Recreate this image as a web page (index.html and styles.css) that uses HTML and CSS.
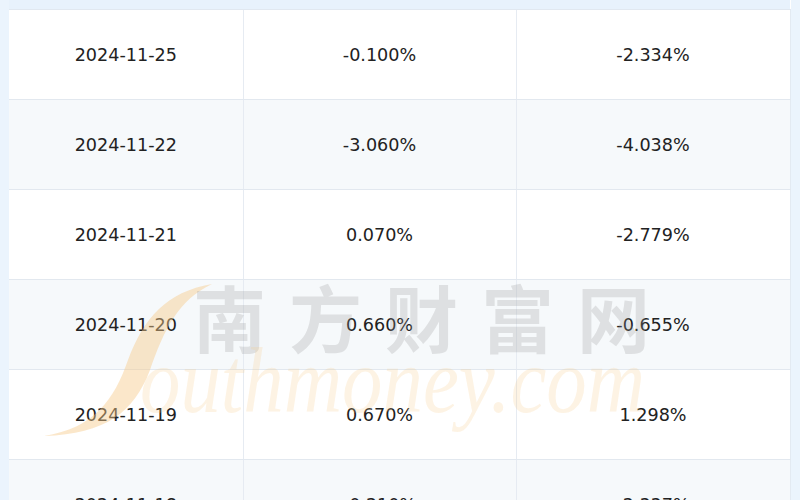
FILE: index.html
```html
<!DOCTYPE html>
<html lang="zh-CN">
<head>
<meta charset="utf-8">
<link rel="stylesheet" href="styles.css">
</head>
<body>
<div class="page">
  <table class="data">
    <colgroup><col class="c1"><col class="c2"><col class="c3"></colgroup>
    <thead><tr class="head"><th></th><th></th><th></th></tr></thead>
    <tbody>
      <tr><td>2024-11-25</td><td>-0.100%</td><td>-2.334%</td></tr>
      <tr class="alt"><td>2024-11-22</td><td>-3.060%</td><td>-4.038%</td></tr>
      <tr><td>2024-11-21</td><td>0.070%</td><td>-2.779%</td></tr>
      <tr class="alt"><td>2024-11-20</td><td>0.660%</td><td>-0.655%</td></tr>
      <tr><td>2024-11-19</td><td>0.670%</td><td>1.298%</td></tr>
      <tr class="alt"><td>2024-11-18</td><td>-0.210%</td><td>-2.337%</td></tr>
    </tbody>
  </table>
  <div class="watermark">
    <svg class="swoosh" width="180" height="170" viewBox="0 0 180 170">
      <path d="M8 158 C 58 150, 78 122, 92 82 C 108 40, 130 14, 176 6 C 142 22, 128 52, 114 92 C 98 134, 70 156, 8 158 Z" fill="#f6c98a" opacity="0.45"/>
    </svg>
    <div class="cn">南方财富网</div>
    <div class="en">outhmoney.com</div>
  </div>
</div>
</body>
</html>
```
FILE: styles.css
```css
html, body {
  margin: 0;
  padding: 0;
  background: #ebf4fd;
  overflow: hidden;
}
.page {
  position: relative;
  width: 800px;
  height: 500px;
  padding: 0 10px 0 9px;
  box-sizing: border-box;
  font-family: "DejaVu Sans", sans-serif;
}
.data {
  width: 781px;
  border-collapse: collapse;
  table-layout: fixed;
  background: #ffffff;
}
.c1 { width: 234px; }
.c2 { width: 273px; }
.c3 { width: 274px; }
.head th {
  height: 9px;
  padding: 0;
  background: #e8f2fc;
  border-bottom: 1px solid #e1e8f0;
}
.data td {
  height: 89px;
  padding: 0;
  text-align: center;
  vertical-align: middle;
  font-size: 17.6px;
  color: #222222;
  border-bottom: 1px solid #e2e8ef;
  border-right: 1px solid #e6ebf2;
}
.data td:last-child { border-right: 1px solid #e3eaf2; }
.data tr.alt td { background: #f6f9fb; }
.watermark {
  position: absolute;
  left: 0;
  top: 0;
  width: 800px;
  height: 500px;
  pointer-events: none;
}
.swoosh {
  position: absolute;
  left: 36px;
  top: 278px;
}
.cn {
  position: absolute;
  left: 193px;
  top: 279px;
  font-family: "Noto Sans CJK SC", sans-serif;
  font-weight: 700;
  font-size: 73px;
  letter-spacing: 23px;
  line-height: 1;
  color: rgba(150, 150, 150, 0.25);
  white-space: nowrap;
}
.en {
  position: absolute;
  left: 140px;
  top: 333px;
  font-family: "Liberation Serif", serif;
  font-style: italic;
  font-size: 94px;
  line-height: 1;
  color: rgba(248, 200, 130, 0.22);
  white-space: nowrap;
  transform: scaleX(0.86);
  transform-origin: left top;
}
```
